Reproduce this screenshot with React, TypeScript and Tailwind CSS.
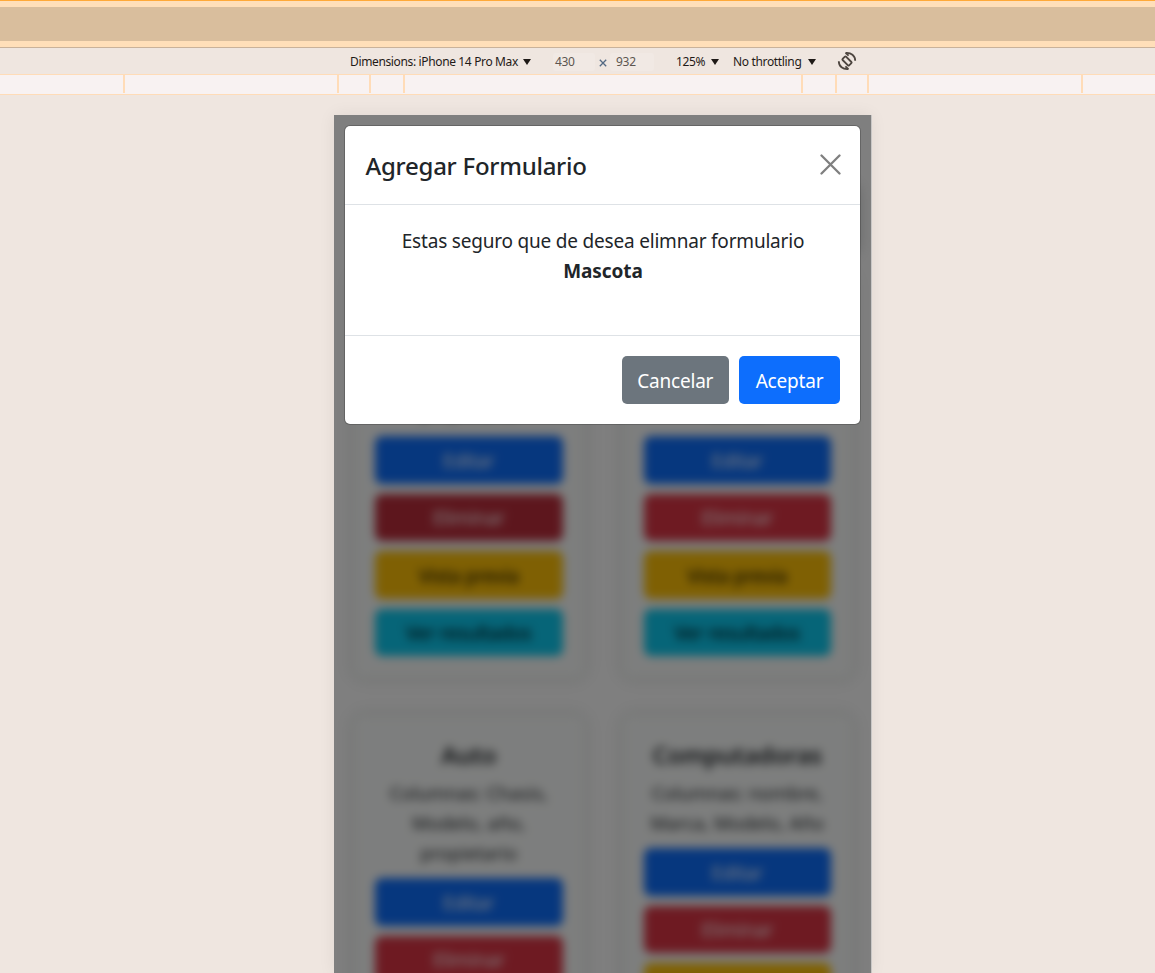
import React from "react";

const tickGaps = [
  "w-[125px]",
  "w-[214px]",
  "w-[32px]",
  "w-[34px]",
  "w-[398px]",
  "w-[34px]",
  "w-[32px]",
  "w-[214px]",
];

function Caret() {
  return (
    <svg width="8" height="6" viewBox="0 0 8 6" className="shrink-0">
      <path d="M0 0h8L4 6z" fill="#1f1a17" />
    </svg>
  );
}

function RotateIcon() {
  return (
    <svg width="20" height="20" viewBox="0 0 20 20" fill="none" stroke="#4d453f" strokeWidth="1.800" className="mb-[2px] shrink-0">
      <rect x="7.6" y="5.400" width="4.800" height="9.200" rx="0.8" transform="rotate(-45 10 10)" />
      <path d="M8.600 1.900C14 1.300 18.300 4.600 18.200 9.800" />
      <path d="M8.600 1.900l3 2.800" />
      <path d="M11.400 18.100C6 18.700 1.700 15.400 1.800 10.200" />
      <path d="M11.400 18.100l-3-2.800" />
    </svg>
  );
}

function CardButtons() {
  const base = "flex h-[47.5px] items-center justify-center rounded-[7px] pt-[2px] text-[19px] leading-[30px] tracking-[-0.2px]";
  return (
    <div className="flex flex-col gap-[10px]">
      <div className={`${base} bg-[#0d6efd] text-white`}>Editar</div>
      <div className={`${base} bg-[#dc3545] text-white group-data-[active=true]:bg-[#bb2d3b]`}>Eliminar</div>
      <div className={`${base} bg-[#ffc107] text-black`}>Vista previa</div>
      <div className={`${base} bg-[#0dcaf0] text-black`}>Ver resultados</div>
    </div>
  );
}

function FormCard({ title, lines, active = false }: { title: string; lines: string[]; active?: boolean }) {
  return (
    <div
      data-active={active}
      className="group w-[227.5px] rounded-[8px] bg-[#fbfdfc] p-[20px] text-center text-[#212529] shadow-[0_0_14px_6px_rgba(60,75,70,0.1)]"
    >
      <div className="h-[41px] pt-[3px] text-[24px] leading-[30px] font-semibold tracking-[-0.3px]">{title}</div>
      <div className="mb-[10px] text-[18.5px] leading-[30px] whitespace-nowrap">
        {lines.map((l) => (
          <div key={l}>{l}</div>
        ))}
      </div>
      <CardButtons />
    </div>
  );
}

export default function App() {
  return (
    <div className="flex h-[973px] w-[1155px] flex-col overflow-hidden bg-[#efe6e0] font-['Noto_Sans',sans-serif]">
      <div className="h-[48px] shrink-0 border-t border-b border-t-[#ffa938] border-b-[#c9b29a] bg-[#ffdfb9] py-[6px]">
        <div className="h-[34px] bg-[#d9be9d]" />
      </div>

      <div className="flex h-[26px] shrink-0 items-center bg-[#efe6e0] pt-px pl-[350px] text-[12px] whitespace-nowrap text-[#1f1a17]">
        <div className="flex w-[203px] items-center gap-[5px]">
          <span className="w-[168px] tracking-[-0.36px]">Dimensions: iPhone 14 Pro Max</span>
          <Caret />
        </div>
        <div className="h-[18px] w-[42px] rounded-[3px] bg-[#f1e9e4] pl-[2px] leading-[18px] tracking-[-0.4px] text-[#5d5650]">430</div>
        <div className="flex w-[15px] justify-center pt-[3px]">
          <svg width="8" height="8" viewBox="0 0 8 8" stroke="#536983" strokeWidth="1.3">
            <path d="M.8.8l6.400 6.400M7.200.8L.8 7.200" />
          </svg>
        </div>
        <div className="h-[18px] w-[44px] rounded-[3px] bg-[#f1e9e4] pl-[6px] leading-[18px] tracking-[-0.3px] text-[#5d5650]">932</div>
        <div className="ml-[22px] flex w-[57px] items-center gap-[5px]">
          <span className="w-[30px] tracking-[-0.4px]">125%</span>
          <Caret />
        </div>
        <div className="flex w-[104px] items-center gap-[5px]">
          <span className="w-[70px] tracking-[-0.34px]">No throttling</span>
          <Caret />
        </div>
        <RotateIcon />
      </div>

      <div className="flex h-[21px] shrink-0 border-t border-b border-[#ffdcb8] bg-[#f8f2f2]">
        {tickGaps.map((w, i) => (
          <div key={i} className={`${w} h-[18px] shrink-0 border-r-2 border-[#ffdcb8]`} />
        ))}
      </div>

      <div className="flex min-h-0 flex-1 pt-[20px] pl-[334px]">
        <div className="relative h-[858px] w-[537px] shrink-0 bg-white shadow-[1px_0_0_#c9c7c6,0_0_16px_rgba(0,0,0,0.07)]">
          <div className="h-full overflow-hidden">
            <div className="flex flex-col pr-[20px] pl-[21px] pt-[70px] blur-[5px]">
              <div className="h-[68px] rounded-[8px] bg-[#fbfdfc] shadow-[5px_0_12px_2px_rgba(40,50,50,0.3)]" />
              <div className="mt-[22px] flex items-start justify-between">
                <FormCard active title="Mascota" lines={["Columnas: Nombre,", "Raza, edad,", "propietario"]} />
                <FormCard title="Persona" lines={["Columnas: Nombre,", "Apellido, edad,", "correo"]} />
              </div>
              <div className="mt-[41px] flex items-start justify-between">
                <FormCard title="Auto" lines={["Columnas: Chasis,", "Modelo, año,", "propietario"]} />
                <FormCard title="Computadoras" lines={["Columnas: nombre,", "Marca, Modelo, Año"]} />
              </div>
            </div>
          </div>

          <div className="absolute inset-0 bg-black/50 px-[11px] pt-[11px]">
            <div className="flex h-[298px] w-[515px] flex-col rounded-[5px] bg-white text-[#212529] shadow-[0_0_0_1px_rgba(0,0,0,0.2)]">
              <div className="flex h-[79px] shrink-0 items-center justify-between border-b border-[#dee2e6] pr-[19px] pl-[20.5px]">
                <h5 className="pt-[2px] text-[24px] leading-[36px] font-medium tracking-[-0.26px] whitespace-nowrap">Agregar Formulario</h5>
                <svg width="21" height="21" viewBox="0 0 21 21" stroke="#7f7f7f" strokeWidth="2.300" strokeLinecap="round" className="mb-px">
                  <path d="M1.500 1.500l18 18M19.500 1.500l-18 18" />
                </svg>
              </div>
              <div className="h-[130px] shrink-0 pt-[21px] pl-px text-center text-[19px] leading-[30px] whitespace-nowrap">
                <div className="tracking-[-0.2px]">Estas seguro que de desea elimnar formulario</div>
                <div className="font-bold tracking-[-0.1px]">Mascota</div>
              </div>
              <div className="flex flex-1 items-center justify-end gap-[10px] border-t border-[#dee2e6] px-[20px] text-[19px] leading-[30px] tracking-[-0.2px] text-white">
                <button className="h-[48px] w-[107.500px] rounded-[5px] bg-[#6c757d] pt-[2px]">Cancelar</button>
                <button className="h-[48px] w-[101px] rounded-[5px] bg-[#0d6efd] pt-[2px]">Aceptar</button>
              </div>
            </div>
          </div>
        </div>
      </div>
    </div>
  );
}
